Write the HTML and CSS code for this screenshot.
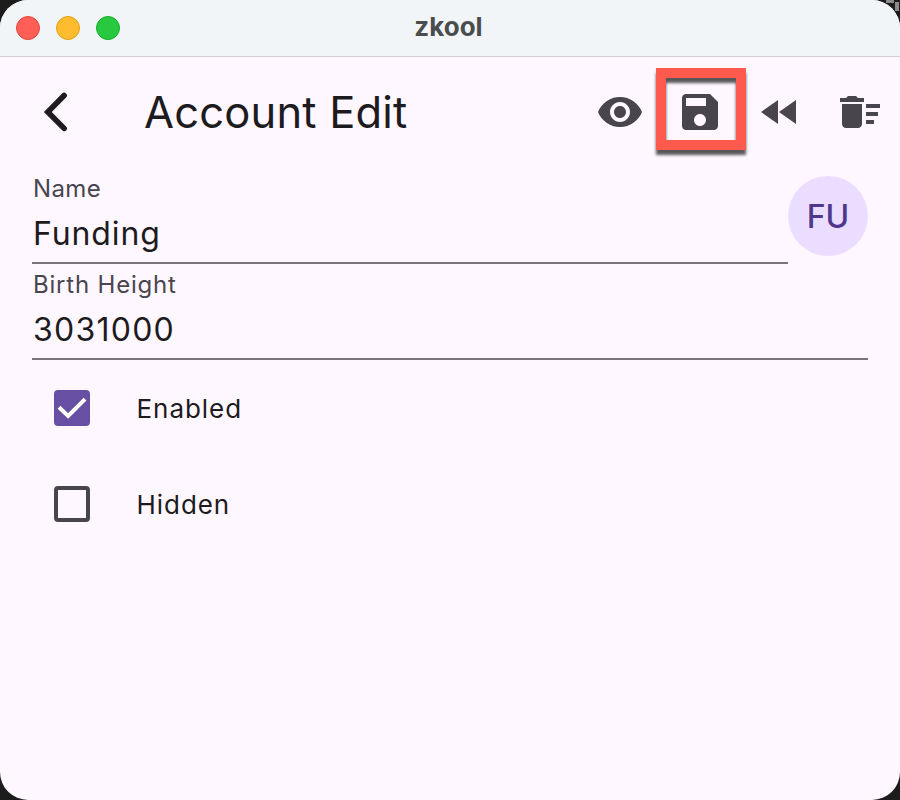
FILE: index.html
```
<!DOCTYPE html>
<html lang="en">
<head>
<meta charset="utf-8">
<title>zkool</title>
<link rel="stylesheet" href="styles.css">
</head>
<body>
<div class="window">
  <header class="titlebar">
    <div class="lights"><span class="light red"></span><span class="light yellow"></span><span class="light green"></span></div>
    <span class="window-title">zkool</span>
  </header>
  <nav class="appbar">
    <svg class="back" viewBox="0 0 48 48"><path d="M32.1 7.5 15.8 24l16.3 16.4" fill="none" stroke="currentColor" stroke-width="5.6" stroke-linecap="round"/></svg>
    <h1>Account Edit</h1>
    <div class="actions">
      <span class="action"><svg viewBox="0 0 24 24"><path d="M12 4.5C7 4.5 2.73 7.61 1 12c1.73 4.39 6 7.5 11 7.5s9.27-3.11 11-7.5c-1.73-4.39-6-7.5-11-7.5zM12 17c-2.76 0-5-2.24-5-5s2.24-5 5-5 5 2.24 5 5-2.24 5-5 5zm0-8c-1.66 0-3 1.34-3 3s1.34 3 3 3 3-1.34 3-3-1.34-3-3-3z"/></svg></span>
      <span class="action highlighted"><svg viewBox="0 0 24 24"><path d="M17 3H5c-1.11 0-2 .9-2 2v14c0 1.1.89 2 2 2h14c1.1 0 2-.9 2-2V7l-4-4zm-5 16c-1.66 0-3-1.34-3-3s1.34-3 3-3 3 1.34 3 3-1.34 3-3 3zm3-10H5V5h10v4z"/></svg></span>
      <span class="action"><svg viewBox="0 0 24 24"><path d="M11 18V6l-8.5 6 8.5 6zm.5-6l8.5 6V6l-8.5 6z"/></svg></span>
      <span class="action"><svg viewBox="0 0 24 24"><path d="M15 16h4v2h-4zm0-8h7v2h-7zm0 4h6v2h-6zM3 18c0 1.1.9 2 2 2h6c1.1 0 2-.9 2-2V8H3v10zM14 5h-3l-1-1H6L5 5H2v2h12z"/></svg></span>
    </div>
  </nav>
  <main class="form">
    <div class="name-row">
      <div class="field"><div class="label name-label">Name</div><div class="value">Funding</div></div>
      <div class="avatar">FU</div>
    </div>
    <div class="field"><div class="label">Birth Height</div><div class="value height-value">3031000</div></div>
    <div class="check-row"><span class="box checked"><svg viewBox="0 0 36 36"><path d="M5 17.2l9.2 8.8L31 9.2" fill="none" stroke="#fff" stroke-width="4"/></svg></span><span class="check-label">Enabled</span></div>
    <div class="check-row"><span class="box"></span><span class="check-label">Hidden</span></div>
  </main>
</div>
</body>
</html>
```
FILE: styles.css
```
*, *::after { box-sizing: border-box; }
body { margin: 0; background: linear-gradient(#8c8c8c, #8c8c8c) 886px 0 / 8px 3px no-repeat, linear-gradient(#8c8c8c, #8c8c8c) 895px 2px / 4px 9px no-repeat, #1c1c1c; font-family: Inter, "Liberation Sans", sans-serif; color: #1d1b20; }
.window { width: 900px; height: 800px; overflow: hidden; border-radius: 28px; background: #fef7ff; }
.titlebar { position: relative; height: 57px; background: #f1f5f8; border-bottom: 1px solid #d3ced6; display: flex; justify-content: center; }
.lights { position: absolute; left: 16px; top: 16px; display: flex; gap: 16px; }
.light { width: 24px; height: 24px; border-radius: 50%; border: 1px solid; }
.red { background: #ff5f57; border-color: #e2463f; }
.yellow { background: #febc2e; border-color: #e1a116; }
.green { background: #28c840; border-color: #12ac28; }
.window-title { padding-right: 3px; font-size: 26px; line-height: 54px; font-weight: 700; color: #4b4c4e; }
.appbar { height: 111px; display: flex; align-items: center; padding: 0 0 2px 32px; }
.back { width: 48px; height: 48px; }
h1 { margin: 0 0 0 64px; flex: 1; font-size: 43.5px; line-height: 56px; font-weight: 430; letter-spacing: .18px; white-space: nowrap; }
.actions { display: flex; align-items: center; }
.action { width: 80px; height: 80px; display: flex; align-items: center; justify-content: center; color: #49454f; position: relative; }
.action svg { width: 48px; height: 48px; fill: currentColor; }
.highlighted::after { content: ""; position: absolute; left: -4px; top: -4px; width: 90px; height: 82px; border: 10px solid #ff5a4d; filter: drop-shadow(0 5px 1.5px rgba(0,0,0,.65)); }
.form { padding: 0 32px; }
.name-row { display: flex; }
.field { flex: 1; height: 96px; border-bottom: 2px solid #79747e; padding: 8px 0 0 1px; }
.label { font-size: 24px; line-height: 26px; font-weight: 430; letter-spacing: .8px; color: #49454f; }
.name-label { letter-spacing: .4px; }
.value { margin-top: 14.5px; font-size: 32px; line-height: 34px; font-weight: 430; letter-spacing: .9px; }
.height-value { letter-spacing: 1.25px; }
.avatar { width: 80px; height: 80px; margin-top: 8px; border-radius: 50%; background: #eaddff; color: #4f378b; display: flex; align-items: center; justify-content: center; font-size: 32px; font-weight: 530; padding-top: 1px; }
.check-row { height: 96px; display: flex; align-items: center; padding-left: 22px; gap: 46.5px; }
.box { width: 36px; height: 36px; border: 4px solid #49454f; border-radius: 4px; }
.checked { border: 0; background: #6750a4; }
.checked svg { display: block; }
.check-label { font-size: 26px; font-weight: 430; letter-spacing: .95px; }
```
